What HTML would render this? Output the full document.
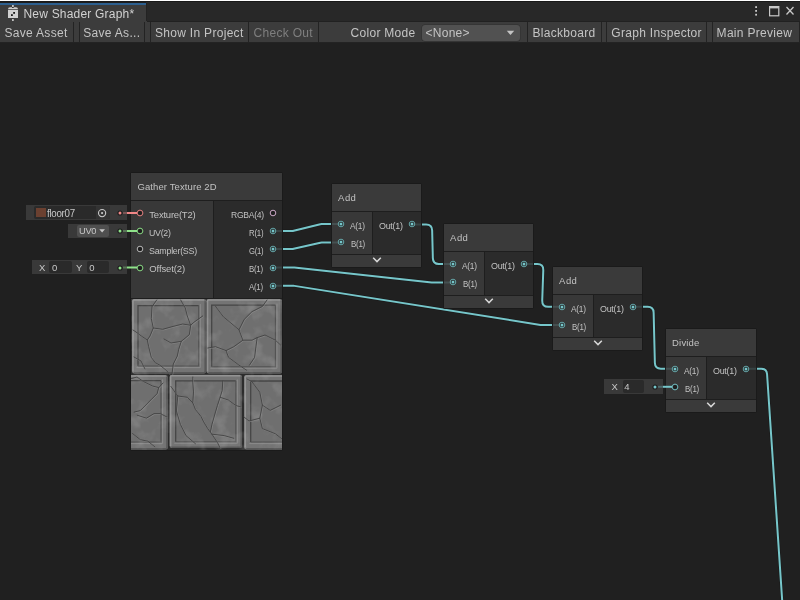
<!DOCTYPE html>
<html><head><meta charset="utf-8"><style>
html,body{margin:0;padding:0;width:800px;height:600px;overflow:hidden;background:#202020;font-family:"Liberation Sans", sans-serif;}
#root{position:absolute;left:0;top:0;width:800px;height:600px;overflow:hidden;will-change:transform;}
</style></head><body><div id="root">
<div style="position:absolute;left:0px;top:0px;width:800px;height:1px;background:#ffffff;"></div><div style="position:absolute;left:0px;top:1px;width:800px;height:1px;background:#191919;"></div><div style="position:absolute;left:0px;top:2px;width:800px;height:19px;background:#282828;"></div><div style="position:absolute;left:0px;top:2px;width:146px;height:1px;background:#1e1e1e;"></div><div style="position:absolute;left:0px;top:3px;width:146px;height:2px;background:#2c5f8f;"></div><div style="position:absolute;left:0px;top:5px;width:146px;height:16px;background:#3c3c3c;"></div><div style="position:absolute;left:146px;top:3px;width:1px;height:18px;background:#232323;"></div><svg style="position:absolute;left:0;top:0" width="30" height="22">
<rect x="12.1" y="5" width="1.6" height="2.2" fill="#d0d0d0"/>
<path d="M8 9.3 Q8 7.2 10 7.2 L16 7.2 Q18 7.2 18 9.3 Z" fill="#d0d0d0"/>
<rect x="12.1" y="7" width="1.6" height="1" fill="#2a2a2a"/>
<rect x="8" y="10" width="10" height="8" fill="#d0d0d0"/>
<rect x="11" y="14.2" width="1.8" height="1.8" fill="#1a1a1a"/>
<rect x="13.2" y="12" width="1.8" height="1.8" fill="#1a1a1a"/>
<rect x="12.1" y="19" width="1.6" height="2" fill="#d0d0d0"/>
</svg><div style="position:absolute;left:23.50px;top:7.75px;font-size:12px;line-height:13.79px;letter-spacing:0.200px;color:#d2d2d2;white-space:nowrap">New Shader Graph*</div><svg style="position:absolute;left:740px;top:0" width="60" height="21">
<rect x="15.2" y="6.2" width="1.8" height="1.8" fill="#c8c8c8"/>
<rect x="15.2" y="10" width="1.8" height="1.8" fill="#c8c8c8"/>
<rect x="15.2" y="13.8" width="1.8" height="1.8" fill="#c8c8c8"/>
<rect x="29.6" y="6.6" width="9.2" height="9.2" fill="none" stroke="#c8c8c8" stroke-width="1.2"/>
<rect x="29.6" y="6.6" width="9.2" height="1.8" fill="#c8c8c8"/>
<path d="M46.5 7 L53.5 14.5 M53.5 7 L46.5 14.5" stroke="#c8c8c8" stroke-width="1.3"/>
</svg><div style="position:absolute;left:0px;top:21px;width:800px;height:21px;background:#3c3c3c;"></div><div style="position:absolute;left:147px;top:21px;width:653px;height:1px;background:#212121;"></div><div style="position:absolute;left:0px;top:42px;width:800px;height:1px;background:#232323;"></div><div style="position:absolute;left:73px;top:22px;width:1px;height:20px;background:#232323;"></div><div style="position:absolute;left:79px;top:22px;width:1px;height:20px;background:#232323;"></div><div style="position:absolute;left:144px;top:22px;width:1px;height:20px;background:#232323;"></div><div style="position:absolute;left:150px;top:22px;width:1px;height:20px;background:#232323;"></div><div style="position:absolute;left:248px;top:22px;width:1px;height:20px;background:#232323;"></div><div style="position:absolute;left:318px;top:22px;width:1px;height:20px;background:#232323;"></div><div style="position:absolute;left:527px;top:22px;width:1px;height:20px;background:#232323;"></div><div style="position:absolute;left:601px;top:22px;width:1px;height:20px;background:#232323;"></div><div style="position:absolute;left:606px;top:22px;width:1px;height:20px;background:#232323;"></div><div style="position:absolute;left:706px;top:22px;width:1px;height:20px;background:#232323;"></div><div style="position:absolute;left:712px;top:22px;width:1px;height:20px;background:#232323;"></div><div style="position:absolute;left:799px;top:22px;width:1px;height:20px;background:#232323;"></div><div style="position:absolute;left:4.50px;top:26.75px;font-size:12px;line-height:13.79px;letter-spacing:0.300px;color:#c4c4c4;white-space:nowrap">Save Asset</div><div style="position:absolute;left:83.30px;top:26.75px;font-size:12px;line-height:13.79px;letter-spacing:0.300px;color:#c4c4c4;white-space:nowrap">Save As...</div><div style="position:absolute;left:155.00px;top:26.75px;font-size:12px;line-height:13.79px;letter-spacing:0.300px;color:#c4c4c4;white-space:nowrap">Show In Project</div><div style="position:absolute;left:253.50px;top:26.75px;font-size:12px;line-height:13.79px;letter-spacing:0.300px;color:#7f7f7f;white-space:nowrap">Check Out</div><div style="position:absolute;left:350.50px;top:26.75px;font-size:12px;line-height:13.79px;letter-spacing:0.300px;color:#c4c4c4;white-space:nowrap">Color Mode</div><div style="position:absolute;left:422px;top:25px;width:98px;height:16px;background:#515151;border-radius:3px;box-shadow:0 0 0 0.5px #2e2e2e"></div><div style="position:absolute;left:425.40px;top:26.75px;font-size:12px;line-height:13.79px;letter-spacing:0.300px;color:#c4c4c4;white-space:nowrap">&lt;None&gt;</div><svg style="position:absolute;left:506px;top:30px" width="10" height="6"><path d="M0.8 0.8 L8.2 0.8 L4.5 5 Z" fill="#c4c4c4"/></svg><div style="position:absolute;left:532.50px;top:26.75px;font-size:12px;line-height:13.79px;letter-spacing:0.300px;color:#c4c4c4;white-space:nowrap">Blackboard</div><div style="position:absolute;left:611.30px;top:26.75px;font-size:12px;line-height:13.79px;letter-spacing:0.300px;color:#c4c4c4;white-space:nowrap">Graph Inspector</div><div style="position:absolute;left:716.60px;top:26.75px;font-size:12px;line-height:13.79px;letter-spacing:0.300px;color:#c4c4c4;white-space:nowrap">Main Preview</div><div style="position:absolute;left:0px;top:43px;width:800px;height:557px;background:#202020;"></div><svg style="position:absolute;left:0;top:0" width="800" height="600"><path d="M273,231 L292.26,231.00 Q293,231 293.72,230.82 L320.28,224.18 Q321,224 321.74,224.00 L341,224" fill="none" stroke="#151515" stroke-width="3.2" stroke-opacity="0.6"/><path d="M273,249 L292.31,249.00 Q293,249 293.67,248.84 L320.33,242.66 Q321,242.5 321.69,242.50 L341,242.5" fill="none" stroke="#151515" stroke-width="3.2" stroke-opacity="0.6"/><path d="M273,267.5 L293.67,267.50 Q294,267.5 294.32,267.54 L431.68,282.46 Q432,282.5 432.33,282.50 L453,282.5" fill="none" stroke="#151515" stroke-width="3.2" stroke-opacity="0.6"/><path d="M273,285.8 L293.53,285.80 Q294,285.8 294.47,285.87 L540.53,324.93 Q541,325 541.47,325.00 L562,325" fill="none" stroke="#151515" stroke-width="3.2" stroke-opacity="0.6"/><path d="M412,224.5 L426.15,224.50 Q432,224.5 432.15,230.35 L432.85,258.15 Q433,264 438.85,264.00 L453,264" fill="none" stroke="#151515" stroke-width="3.2" stroke-opacity="0.6"/><path d="M524,264 L537.29,264.00 Q543.5,264 543.28,270.21 L542.22,300.59 Q542,306.8 548.21,306.80 L562,306.8" fill="none" stroke="#151515" stroke-width="3.2" stroke-opacity="0.6"/><path d="M633,306.8 L647.64,306.80 Q653.5,306.8 653.64,312.65 L654.86,362.85 Q655,368.7 660.86,368.70 L675,368.7" fill="none" stroke="#151515" stroke-width="3.2" stroke-opacity="0.6"/><path d="M746.7,368.7 L761.09,368.70 Q766.7,368.7 767.07,374.30 L783.5,620" fill="none" stroke="#151515" stroke-width="3.2" stroke-opacity="0.6"/><path d="M273,231 L292.26,231.00 Q293,231 293.72,230.82 L320.28,224.18 Q321,224 321.74,224.00 L341,224" fill="none" stroke="#76c6ca" stroke-width="2"/><path d="M273,249 L292.31,249.00 Q293,249 293.67,248.84 L320.33,242.66 Q321,242.5 321.69,242.50 L341,242.5" fill="none" stroke="#76c6ca" stroke-width="2"/><path d="M273,267.5 L293.67,267.50 Q294,267.5 294.32,267.54 L431.68,282.46 Q432,282.5 432.33,282.50 L453,282.5" fill="none" stroke="#76c6ca" stroke-width="2"/><path d="M273,285.8 L293.53,285.80 Q294,285.8 294.47,285.87 L540.53,324.93 Q541,325 541.47,325.00 L562,325" fill="none" stroke="#76c6ca" stroke-width="2"/><path d="M412,224.5 L426.15,224.50 Q432,224.5 432.15,230.35 L432.85,258.15 Q433,264 438.85,264.00 L453,264" fill="none" stroke="#76c6ca" stroke-width="2"/><path d="M524,264 L537.29,264.00 Q543.5,264 543.28,270.21 L542.22,300.59 Q542,306.8 548.21,306.80 L562,306.8" fill="none" stroke="#76c6ca" stroke-width="2"/><path d="M633,306.8 L647.64,306.80 Q653.5,306.8 653.64,312.65 L654.86,362.85 Q655,368.7 660.86,368.70 L675,368.7" fill="none" stroke="#76c6ca" stroke-width="2"/><path d="M746.7,368.7 L761.09,368.70 Q766.7,368.7 767.07,374.30 L783.5,620" fill="none" stroke="#76c6ca" stroke-width="2"/></svg><div style="position:absolute;left:130px;top:172px;width:151px;height:277px;border:1px solid #1a1a1a;border-radius:1.5px"></div><div style="position:absolute;left:131px;top:173px;width:151px;height:27px;background:rgba(63,63,63,0.86);"></div><div style="position:absolute;left:131px;top:200px;width:151px;height:1px;background:rgba(30,30,30,0.9);"></div><div style="position:absolute;left:131px;top:201px;width:82px;height:97px;background:rgba(60,60,60,0.86);"></div><div style="position:absolute;left:213px;top:201px;width:1px;height:97px;background:rgba(30,30,30,0.9);"></div><div style="position:absolute;left:214px;top:201px;width:68px;height:97px;background:rgba(45,45,45,0.86);"></div><div style="position:absolute;left:131px;top:298px;width:151px;height:1px;background:rgba(30,30,30,0.9);"></div><div style="position:absolute;left:137.40px;top:182.05px;font-size:9.5px;line-height:10.92px;letter-spacing:0.112px;color:#c2c2c2;white-space:nowrap;">Gather Texture 2D</div><svg style="position:absolute;left:136px;top:208.9px" width="8" height="8"><circle cx="4" cy="4" r="2.8" fill="#1e1e1e" stroke="#f08787" stroke-width="0.8"/></svg><div style="position:absolute;left:149.30px;top:210.25px;font-size:9.5px;line-height:10.92px;letter-spacing:-0.220px;color:#c2c2c2;white-space:nowrap;">Texture(T2)</div><svg style="position:absolute;left:136px;top:227.1px" width="8" height="8"><circle cx="4" cy="4" r="2.8" fill="#1e1e1e" stroke="#8fe38a" stroke-width="0.8"/></svg><div style="position:absolute;left:149.30px;top:228.25px;font-size:9.5px;line-height:10.92px;letter-spacing:-0.300px;color:#c2c2c2;white-space:nowrap;transform:scaleX(0.929);transform-origin:0px 0;">UV(2)</div><svg style="position:absolute;left:136px;top:245.2px" width="8" height="8"><circle cx="4" cy="4" r="2.8" fill="#1e1e1e" stroke="#d8d8d8" stroke-width="0.8"/></svg><div style="position:absolute;left:149.30px;top:246.05px;font-size:9.5px;line-height:10.92px;letter-spacing:-0.300px;color:#c2c2c2;white-space:nowrap;transform:scaleX(0.937);transform-origin:0px 0;">Sampler(SS)</div><svg style="position:absolute;left:136px;top:263.5px" width="8" height="8"><circle cx="4" cy="4" r="2.8" fill="#1e1e1e" stroke="#8fe38a" stroke-width="0.8"/></svg><div style="position:absolute;left:149.30px;top:264.05px;font-size:9.5px;line-height:10.92px;letter-spacing:-0.113px;color:#c2c2c2;white-space:nowrap;">Offset(2)</div><svg style="position:absolute;left:269px;top:208.9px" width="8" height="8"><circle cx="4" cy="4" r="2.8" fill="#1e1e1e" stroke="#f3c6ee" stroke-width="0.8"/></svg><div style="position:absolute;left:230.60px;top:209.65px;font-size:9.5px;line-height:10.92px;letter-spacing:-0.300px;color:#c2c2c2;white-space:nowrap;transform:scaleX(0.902);transform-origin:0px 0;">RGBA(4)</div><svg style="position:absolute;left:269px;top:227.1px" width="8" height="8"><circle cx="4" cy="4" r="2.8" fill="#1e1e1e" stroke="#76c6ca" stroke-width="0.8"/><circle cx="4" cy="4" r="1.5" fill="#76c6ca"/></svg><div style="position:absolute;left:249.10px;top:227.85px;font-size:9.5px;line-height:10.92px;letter-spacing:-0.300px;color:#c2c2c2;white-space:nowrap;transform:scaleX(0.827);transform-origin:0px 0;">R(1)</div><svg style="position:absolute;left:269px;top:245.2px" width="8" height="8"><circle cx="4" cy="4" r="2.8" fill="#1e1e1e" stroke="#76c6ca" stroke-width="0.8"/><circle cx="4" cy="4" r="1.5" fill="#76c6ca"/></svg><div style="position:absolute;left:248.60px;top:245.95px;font-size:9.5px;line-height:10.92px;letter-spacing:-0.300px;color:#c2c2c2;white-space:nowrap;transform:scaleX(0.809);transform-origin:0px 0;">G(1)</div><svg style="position:absolute;left:269px;top:263.5px" width="8" height="8"><circle cx="4" cy="4" r="2.8" fill="#1e1e1e" stroke="#76c6ca" stroke-width="0.8"/><circle cx="4" cy="4" r="1.5" fill="#76c6ca"/></svg><div style="position:absolute;left:249.10px;top:264.25px;font-size:9.5px;line-height:10.92px;letter-spacing:-0.300px;color:#c2c2c2;white-space:nowrap;transform:scaleX(0.827);transform-origin:0px 0;">B(1)</div><svg style="position:absolute;left:269px;top:281.7px" width="8" height="8"><circle cx="4" cy="4" r="2.8" fill="#1e1e1e" stroke="#76c6ca" stroke-width="0.8"/><circle cx="4" cy="4" r="1.5" fill="#76c6ca"/></svg><div style="position:absolute;left:249.10px;top:282.45px;font-size:9.5px;line-height:10.92px;letter-spacing:-0.300px;color:#c2c2c2;white-space:nowrap;transform:scaleX(0.827);transform-origin:0px 0;">A(1)</div><div style="position:absolute;left:331px;top:183px;width:89px;height:83px;border:1px solid #1a1a1a;border-radius:1.5px"></div><div style="position:absolute;left:332px;top:184px;width:89px;height:27px;background:rgba(63,63,63,0.86);"></div><div style="position:absolute;left:332px;top:211px;width:89px;height:1px;background:rgba(30,30,30,0.9);"></div><div style="position:absolute;left:332px;top:212px;width:40px;height:42px;background:rgba(60,60,60,0.86);"></div><div style="position:absolute;left:372px;top:212px;width:1px;height:42px;background:rgba(30,30,30,0.9);"></div><div style="position:absolute;left:373px;top:212px;width:48px;height:42px;background:rgba(45,45,45,0.86);"></div><div style="position:absolute;left:332px;top:254px;width:89px;height:1px;background:rgba(30,30,30,0.9);"></div><div style="position:absolute;left:332px;top:255px;width:89px;height:12px;background:rgba(63,63,63,0.86);"></div><svg style="position:absolute;left:371.5px;top:256.2px" width="10" height="8"><path d="M1.2 1.8 L5 5.6 L8.8 1.8" fill="none" stroke="#d8d8d8" stroke-width="1.5"/></svg><div style="position:absolute;left:338.10px;top:193.05px;font-size:9.5px;line-height:10.92px;letter-spacing:0.450px;color:#c2c2c2;white-space:nowrap;">Add</div><svg style="position:absolute;left:337px;top:220.1px" width="8" height="8"><circle cx="4" cy="4" r="2.8" fill="#1e1e1e" stroke="#76c6ca" stroke-width="0.8"/><circle cx="4" cy="4" r="1.5" fill="#76c6ca"/></svg><svg style="position:absolute;left:337px;top:238.3px" width="8" height="8"><circle cx="4" cy="4" r="2.8" fill="#1e1e1e" stroke="#76c6ca" stroke-width="0.8"/><circle cx="4" cy="4" r="1.5" fill="#76c6ca"/></svg><div style="position:absolute;left:350.10px;top:220.85px;font-size:9.5px;line-height:10.92px;letter-spacing:-0.300px;color:#c2c2c2;white-space:nowrap;transform:scaleX(0.877);transform-origin:0px 0;">A(1)</div><div style="position:absolute;left:350.85px;top:239.05px;font-size:9.5px;line-height:10.92px;letter-spacing:-0.300px;color:#c2c2c2;white-space:nowrap;transform:scaleX(0.833);transform-origin:0px 0;">B(1)</div><svg style="position:absolute;left:408px;top:220.1px" width="8" height="8"><circle cx="4" cy="4" r="2.8" fill="#1e1e1e" stroke="#76c6ca" stroke-width="0.8"/><circle cx="4" cy="4" r="1.5" fill="#76c6ca"/></svg><div style="position:absolute;left:379.10px;top:220.95px;font-size:9.5px;line-height:10.92px;letter-spacing:-0.300px;color:#c2c2c2;white-space:nowrap;transform:scaleX(0.941);transform-origin:0px 0;">Out(1)</div><div style="position:absolute;left:443px;top:223px;width:89px;height:84px;border:1px solid #1a1a1a;border-radius:1.5px"></div><div style="position:absolute;left:444px;top:224px;width:89px;height:27px;background:rgba(63,63,63,0.86);"></div><div style="position:absolute;left:444px;top:251px;width:89px;height:1px;background:rgba(30,30,30,0.9);"></div><div style="position:absolute;left:444px;top:252px;width:40px;height:43px;background:rgba(60,60,60,0.86);"></div><div style="position:absolute;left:484px;top:252px;width:1px;height:43px;background:rgba(30,30,30,0.9);"></div><div style="position:absolute;left:485px;top:252px;width:48px;height:43px;background:rgba(45,45,45,0.86);"></div><div style="position:absolute;left:444px;top:295px;width:89px;height:1px;background:rgba(30,30,30,0.9);"></div><div style="position:absolute;left:444px;top:296px;width:89px;height:12px;background:rgba(63,63,63,0.86);"></div><svg style="position:absolute;left:483.5px;top:297.2px" width="10" height="8"><path d="M1.2 1.8 L5 5.6 L8.8 1.8" fill="none" stroke="#d8d8d8" stroke-width="1.5"/></svg><div style="position:absolute;left:450.10px;top:233.05px;font-size:9.5px;line-height:10.92px;letter-spacing:0.450px;color:#c2c2c2;white-space:nowrap;">Add</div><svg style="position:absolute;left:449px;top:260.1px" width="8" height="8"><circle cx="4" cy="4" r="2.8" fill="#1e1e1e" stroke="#76c6ca" stroke-width="0.8"/><circle cx="4" cy="4" r="1.5" fill="#76c6ca"/></svg><svg style="position:absolute;left:449px;top:278.3px" width="8" height="8"><circle cx="4" cy="4" r="2.8" fill="#1e1e1e" stroke="#76c6ca" stroke-width="0.8"/><circle cx="4" cy="4" r="1.5" fill="#76c6ca"/></svg><div style="position:absolute;left:462.10px;top:260.85px;font-size:9.5px;line-height:10.92px;letter-spacing:-0.300px;color:#c2c2c2;white-space:nowrap;transform:scaleX(0.877);transform-origin:0px 0;">A(1)</div><div style="position:absolute;left:462.85px;top:279.05px;font-size:9.5px;line-height:10.92px;letter-spacing:-0.300px;color:#c2c2c2;white-space:nowrap;transform:scaleX(0.833);transform-origin:0px 0;">B(1)</div><svg style="position:absolute;left:520px;top:260.1px" width="8" height="8"><circle cx="4" cy="4" r="2.8" fill="#1e1e1e" stroke="#76c6ca" stroke-width="0.8"/><circle cx="4" cy="4" r="1.5" fill="#76c6ca"/></svg><div style="position:absolute;left:491.10px;top:260.95px;font-size:9.5px;line-height:10.92px;letter-spacing:-0.300px;color:#c2c2c2;white-space:nowrap;transform:scaleX(0.941);transform-origin:0px 0;">Out(1)</div><div style="position:absolute;left:552px;top:266px;width:89px;height:83px;border:1px solid #1a1a1a;border-radius:1.5px"></div><div style="position:absolute;left:553px;top:267px;width:89px;height:27px;background:rgba(63,63,63,0.86);"></div><div style="position:absolute;left:553px;top:294px;width:89px;height:1px;background:rgba(30,30,30,0.9);"></div><div style="position:absolute;left:553px;top:295px;width:40px;height:42px;background:rgba(60,60,60,0.86);"></div><div style="position:absolute;left:593px;top:295px;width:1px;height:42px;background:rgba(30,30,30,0.9);"></div><div style="position:absolute;left:594px;top:295px;width:48px;height:42px;background:rgba(45,45,45,0.86);"></div><div style="position:absolute;left:553px;top:337px;width:89px;height:1px;background:rgba(30,30,30,0.9);"></div><div style="position:absolute;left:553px;top:338px;width:89px;height:12px;background:rgba(63,63,63,0.86);"></div><svg style="position:absolute;left:592.5px;top:339.2px" width="10" height="8"><path d="M1.2 1.8 L5 5.6 L8.8 1.8" fill="none" stroke="#d8d8d8" stroke-width="1.5"/></svg><div style="position:absolute;left:559.10px;top:276.05px;font-size:9.5px;line-height:10.92px;letter-spacing:0.450px;color:#c2c2c2;white-space:nowrap;">Add</div><svg style="position:absolute;left:558px;top:303.1px" width="8" height="8"><circle cx="4" cy="4" r="2.8" fill="#1e1e1e" stroke="#76c6ca" stroke-width="0.8"/><circle cx="4" cy="4" r="1.5" fill="#76c6ca"/></svg><svg style="position:absolute;left:558px;top:321.3px" width="8" height="8"><circle cx="4" cy="4" r="2.8" fill="#1e1e1e" stroke="#76c6ca" stroke-width="0.8"/><circle cx="4" cy="4" r="1.5" fill="#76c6ca"/></svg><div style="position:absolute;left:571.10px;top:303.85px;font-size:9.5px;line-height:10.92px;letter-spacing:-0.300px;color:#c2c2c2;white-space:nowrap;transform:scaleX(0.877);transform-origin:0px 0;">A(1)</div><div style="position:absolute;left:571.85px;top:322.05px;font-size:9.5px;line-height:10.92px;letter-spacing:-0.300px;color:#c2c2c2;white-space:nowrap;transform:scaleX(0.833);transform-origin:0px 0;">B(1)</div><svg style="position:absolute;left:629px;top:303.1px" width="8" height="8"><circle cx="4" cy="4" r="2.8" fill="#1e1e1e" stroke="#76c6ca" stroke-width="0.8"/><circle cx="4" cy="4" r="1.5" fill="#76c6ca"/></svg><div style="position:absolute;left:600.10px;top:303.95px;font-size:9.5px;line-height:10.92px;letter-spacing:-0.300px;color:#c2c2c2;white-space:nowrap;transform:scaleX(0.941);transform-origin:0px 0;">Out(1)</div><div style="position:absolute;left:665px;top:328px;width:90px;height:83px;border:1px solid #1a1a1a;border-radius:1.5px"></div><div style="position:absolute;left:666px;top:329px;width:90px;height:27px;background:rgba(63,63,63,0.86);"></div><div style="position:absolute;left:666px;top:356px;width:90px;height:1px;background:rgba(30,30,30,0.9);"></div><div style="position:absolute;left:666px;top:357px;width:40px;height:42px;background:rgba(60,60,60,0.86);"></div><div style="position:absolute;left:706px;top:357px;width:1px;height:42px;background:rgba(30,30,30,0.9);"></div><div style="position:absolute;left:707px;top:357px;width:49px;height:42px;background:rgba(45,45,45,0.86);"></div><div style="position:absolute;left:666px;top:399px;width:90px;height:1px;background:rgba(30,30,30,0.9);"></div><div style="position:absolute;left:666px;top:400px;width:90px;height:12px;background:rgba(63,63,63,0.86);"></div><svg style="position:absolute;left:706.0px;top:401.2px" width="10" height="8"><path d="M1.2 1.8 L5 5.6 L8.8 1.8" fill="none" stroke="#d8d8d8" stroke-width="1.5"/></svg><div style="position:absolute;left:672.10px;top:338.05px;font-size:9.5px;line-height:10.92px;letter-spacing:0.160px;color:#c2c2c2;white-space:nowrap;">Divide</div><svg style="position:absolute;left:671px;top:365.1px" width="8" height="8"><circle cx="4" cy="4" r="2.8" fill="#1e1e1e" stroke="#76c6ca" stroke-width="0.8"/><circle cx="4" cy="4" r="1.5" fill="#76c6ca"/></svg><svg style="position:absolute;left:671px;top:383.3px" width="8" height="8"><circle cx="4" cy="4" r="2.8" fill="#1e1e1e" stroke="#76c6ca" stroke-width="0.8"/><circle cx="4" cy="4" r="1.5" fill="#76c6ca"/></svg><div style="position:absolute;left:684.10px;top:365.85px;font-size:9.5px;line-height:10.92px;letter-spacing:-0.300px;color:#c2c2c2;white-space:nowrap;transform:scaleX(0.877);transform-origin:0px 0;">A(1)</div><div style="position:absolute;left:684.85px;top:384.05px;font-size:9.5px;line-height:10.92px;letter-spacing:-0.300px;color:#c2c2c2;white-space:nowrap;transform:scaleX(0.833);transform-origin:0px 0;">B(1)</div><svg style="position:absolute;left:742px;top:365.1px" width="8" height="8"><circle cx="4" cy="4" r="2.8" fill="#1e1e1e" stroke="#76c6ca" stroke-width="0.8"/><circle cx="4" cy="4" r="1.5" fill="#76c6ca"/></svg><div style="position:absolute;left:713.10px;top:365.95px;font-size:9.5px;line-height:10.92px;letter-spacing:-0.300px;color:#c2c2c2;white-space:nowrap;transform:scaleX(0.941);transform-origin:0px 0;">Out(1)</div><div style="position:absolute;left:26px;top:205px;width:101px;height:15px;background:#393939;"></div><div style="position:absolute;left:34px;top:206px;width:75.5px;height:13px;background:#2a2a2a;border-radius:2px"></div><div style="position:absolute;left:95.5px;top:206px;width:14px;height:13px;background:#333333;border-radius:0 2px 2px 0"></div><div style="position:absolute;left:36.3px;top:208.4px;width:9.5px;height:8.5px;background:#6b4030;"></div><div style="position:absolute;left:47.25px;top:208.44px;font-size:10px;line-height:11.49px;letter-spacing:-0.300px;color:#c8c8c8;white-space:nowrap;transform:scaleX(0.975);transform-origin:0px 0;">floor07</div><svg style="position:absolute;left:97px;top:208px" width="11" height="11"><circle cx="5.1" cy="5.1" r="3.6" fill="none" stroke="#c8c8c8" stroke-width="1.1"/><circle cx="5.1" cy="5.1" r="1.1" fill="#c8c8c8"/></svg><div style="position:absolute;left:68px;top:224px;width:59px;height:14px;background:#393939;"></div><div style="position:absolute;left:77px;top:225px;width:32px;height:11.5px;background:#4f4f4f;border-radius:2px"></div><div style="position:absolute;left:79.00px;top:226.15px;font-size:9.5px;line-height:10.92px;letter-spacing:-0.300px;color:#c8c8c8;white-space:nowrap;transform:scaleX(0.977);transform-origin:0px 0;">UV0</div><svg style="position:absolute;left:99px;top:229px" width="7" height="4"><path d="M0.3 0.3 L6 0.3 L3.15 3.4 Z" fill="#c8c8c8"/></svg><div style="position:absolute;left:32px;top:260px;width:95px;height:14px;background:#393939;"></div><div style="position:absolute;left:39.00px;top:263.05px;font-size:9.5px;line-height:10.92px;letter-spacing:0.000px;color:#c8c8c8;white-space:nowrap;">X</div><div style="position:absolute;left:49.3px;top:261px;width:22.5px;height:12px;background:#2a2a2a;border-radius:2px"></div><div style="position:absolute;left:52.10px;top:263.05px;font-size:9.5px;line-height:10.92px;letter-spacing:0.000px;color:#c8c8c8;white-space:nowrap;">0</div><div style="position:absolute;left:75.90px;top:263.05px;font-size:9.5px;line-height:10.92px;letter-spacing:0.000px;color:#c8c8c8;white-space:nowrap;">Y</div><div style="position:absolute;left:86.5px;top:261px;width:22.5px;height:12px;background:#2a2a2a;border-radius:2px"></div><div style="position:absolute;left:89.30px;top:263.05px;font-size:9.5px;line-height:10.92px;letter-spacing:0.000px;color:#c8c8c8;white-space:nowrap;">0</div><div style="position:absolute;left:604px;top:379px;width:59px;height:15px;background:#393939;"></div><div style="position:absolute;left:611.40px;top:382.15px;font-size:9.5px;line-height:10.92px;letter-spacing:0.000px;color:#c8c8c8;white-space:nowrap;">X</div><div style="position:absolute;left:622.6px;top:380px;width:21.2px;height:12.7px;background:#2a2a2a;border-radius:2px"></div><div style="position:absolute;left:624.20px;top:382.15px;font-size:9.5px;line-height:10.92px;letter-spacing:0.000px;color:#c8c8c8;white-space:nowrap;">4</div><svg style="position:absolute;left:0;top:0" width="800" height="600">
<path d="M123,213 L127,213" stroke="#f08787" stroke-opacity="0.35" stroke-width="2"/>
<path d="M127,213 L138,213" stroke="#f08787" stroke-width="2"/>
<path d="M123,231 L127,231" stroke="#8fe38a" stroke-opacity="0.35" stroke-width="2"/>
<path d="M127,231 L138,231" stroke="#8fe38a" stroke-width="2"/>
<path d="M123,267.5 L127,267.5" stroke="#8fe38a" stroke-opacity="0.35" stroke-width="2"/>
<path d="M127,267.5 L138,267.5" stroke="#8fe38a" stroke-width="2"/>
<path d="M658,386.8 L663,386.8" stroke="#76c6ca" stroke-opacity="0.35" stroke-width="2"/>
<path d="M663,386.8 L673,386.8" stroke="#76c6ca" stroke-width="2"/>
</svg><svg style="position:absolute;left:116.7px;top:210px" width="6" height="6"><circle cx="3" cy="3" r="2.6" fill="#1d1d1d"/><circle cx="3" cy="3" r="1.5" fill="#f08787"/></svg><svg style="position:absolute;left:116.7px;top:228px" width="6" height="6"><circle cx="3" cy="3" r="2.6" fill="#1d1d1d"/><circle cx="3" cy="3" r="1.5" fill="#8fe38a"/></svg><svg style="position:absolute;left:116.7px;top:264.5px" width="6" height="6"><circle cx="3" cy="3" r="2.6" fill="#1d1d1d"/><circle cx="3" cy="3" r="1.5" fill="#8fe38a"/></svg><svg style="position:absolute;left:652.2px;top:383.8px" width="6" height="6"><circle cx="3" cy="3" r="2.6" fill="#1d1d1d"/><circle cx="3" cy="3" r="1.5" fill="#76c6ca"/></svg><svg style="position:absolute;left:136px;top:209px" width="8" height="8"><circle cx="4" cy="4" r="2.8" fill="#1e1e1e" stroke="#f08787" stroke-width="0.8"/></svg><svg style="position:absolute;left:136px;top:227.1px" width="8" height="8"><circle cx="4" cy="4" r="2.8" fill="#1e1e1e" stroke="#8fe38a" stroke-width="0.8"/></svg><svg style="position:absolute;left:136px;top:263.5px" width="8" height="8"><circle cx="4" cy="4" r="2.8" fill="#1e1e1e" stroke="#8fe38a" stroke-width="0.8"/></svg><svg style="position:absolute;left:671.2px;top:382.8px" width="8" height="8"><circle cx="4" cy="4" r="2.8" fill="#1e1e1e" stroke="#76c6ca" stroke-width="0.8"/></svg><svg style="position:absolute;left:131px;top:299px" width="151" height="151" viewBox="0 0 151 151">
<defs>
<filter id="nz" x="0" y="0" width="100%" height="100%">
<feTurbulence type="fractalNoise" baseFrequency="0.06" numOctaves="3" seed="7" result="t"/>
<feColorMatrix type="matrix" values="0 0 0 0 0.5  0 0 0 0 0.5  0 0 0 0 0.5  0.9 0 0 0 -0.45" in="t"/>
</filter>
</defs>
<rect width="151" height="151" fill="#2c2c2c"/>
<rect x="1" y="0" width="74" height="74.5" rx="2.2" fill="#747474"/>
<path d="M2,72.5 L2,2 Q2,1 3,1 L73,1" fill="none" stroke="#939393" stroke-width="1.6"/>
<path d="M3,73.7 L73,73.7 Q74.2,73.7 74.2,72.5 L74.2,2" fill="none" stroke="#585858" stroke-width="1.6"/>
<rect x="7" y="6.6" width="60.7" height="60.4" fill="#6f6f6f"/>
<path d="M7,67 L7,6.6 L67.7,6.6" fill="none" stroke="#454545" stroke-width="1.3"/>
<path d="M7,67 L67.7,67 L67.7,6.6" fill="none" stroke="#525252" stroke-width="1.1"/>
<path d="M5.5,68.6 L69.3,68.6 L69.3,5.1" fill="none" stroke="#8c8c8c" stroke-width="0.9"/>
<rect x="75.5" y="0" width="75.5" height="74.5" rx="2.2" fill="#747474"/>
<path d="M76.5,72.5 L76.5,2 Q76.5,1 77.5,1 L149,1" fill="none" stroke="#939393" stroke-width="1.6"/>
<path d="M77.5,73.7 L149,73.7 Q150.2,73.7 150.2,72.5 L150.2,2" fill="none" stroke="#585858" stroke-width="1.6"/>
<rect x="80.7" y="6.1" width="63.7" height="61.6" fill="#6f6f6f"/>
<path d="M80.7,67.7 L80.7,6.1 L144.4,6.1" fill="none" stroke="#454545" stroke-width="1.3"/>
<path d="M80.7,67.7 L144.4,67.7 L144.4,6.1" fill="none" stroke="#525252" stroke-width="1.1"/>
<path d="M79.2,69.3 L146.0,69.3 L146.0,4.6" fill="none" stroke="#8c8c8c" stroke-width="0.9"/>
<rect x="-3" y="76" width="39.8" height="74.5" rx="2.2" fill="#747474"/>
<path d="M-2,148.5 L-2,78 Q-2,77 -1,77 L34.8,77" fill="none" stroke="#939393" stroke-width="1.6"/>
<path d="M-1,149.7 L34.8,149.7 Q36.0,149.7 36.0,148.5 L36.0,78" fill="none" stroke="#585858" stroke-width="1.6"/>
<rect x="-10" y="81.7" width="40" height="61.3" fill="#6f6f6f"/>
<path d="M-10,143 L-10,81.7 L30,81.7" fill="none" stroke="#454545" stroke-width="1.3"/>
<path d="M-10,143 L30,143 L30,81.7" fill="none" stroke="#525252" stroke-width="1.1"/>
<path d="M-11.5,144.6 L31.6,144.6 L31.6,80.2" fill="none" stroke="#8c8c8c" stroke-width="0.9"/>
<rect x="38.6" y="75.8" width="72.4" height="73.2" rx="2.2" fill="#747474"/>
<path d="M39.6,147 L39.6,77.8 Q39.6,76.8 40.6,76.8 L109,76.8" fill="none" stroke="#939393" stroke-width="1.6"/>
<path d="M40.6,148.2 L109,148.2 Q110.2,148.2 110.2,147 L110.2,77.8" fill="none" stroke="#585858" stroke-width="1.6"/>
<rect x="44.7" y="81.9" width="60.099999999999994" height="60.79999999999998" fill="#6f6f6f"/>
<path d="M44.7,142.7 L44.7,81.9 L104.8,81.9" fill="none" stroke="#454545" stroke-width="1.3"/>
<path d="M44.7,142.7 L104.8,142.7 L104.8,81.9" fill="none" stroke="#525252" stroke-width="1.1"/>
<path d="M43.2,144.29999999999998 L106.39999999999999,144.29999999999998 L106.39999999999999,80.4" fill="none" stroke="#8c8c8c" stroke-width="0.9"/>
<rect x="113.2" y="76" width="39.8" height="74.5" rx="2.2" fill="#747474"/>
<path d="M114.2,148.5 L114.2,78 Q114.2,77 115.2,77 L151,77" fill="none" stroke="#939393" stroke-width="1.6"/>
<path d="M115.2,149.7 L151,149.7 Q152.2,149.7 152.2,148.5 L152.2,78" fill="none" stroke="#585858" stroke-width="1.6"/>
<rect x="119.7" y="82" width="38.3" height="61" fill="#6f6f6f"/>
<path d="M119.7,143 L119.7,82 L158,82" fill="none" stroke="#454545" stroke-width="1.3"/>
<path d="M119.7,143 L158,143 L158,82" fill="none" stroke="#525252" stroke-width="1.1"/>
<path d="M118.2,144.6 L159.6,144.6 L159.6,80.5" fill="none" stroke="#8c8c8c" stroke-width="0.9"/>
<rect width="151" height="151" filter="url(#nz)" opacity="0.8"/>
<path d="M25.7,1 L21,7.7 L20.3,19.7 L22.3,29 L19,37 L16.3,41 L17.7,47.7 L20.3,58.3 L24.3,63.7 L29,66.3 L35.7,71.7 L38.3,75" fill="none" stroke="#8e8e8e" stroke-width="0.6" stroke-linejoin="round" transform="translate(0.7,0.7)"/>
<path d="M16.3,41 L10.3,37 L5,33 L2,31" fill="none" stroke="#8e8e8e" stroke-width="0.6" stroke-linejoin="round" transform="translate(0.7,0.7)"/>
<path d="M49.7,1 L54.3,9 L56.3,17 L59.7,26.3 L58.3,35.7 L50.3,42.3 L47.7,50.3 L46.3,57 L42.3,65 L41,75" fill="none" stroke="#8e8e8e" stroke-width="0.6" stroke-linejoin="round" transform="translate(0.7,0.7)"/>
<path d="M22.3,29 L31.7,30.3 L41,27.7 L51.7,25 L59.7,26.3 L62.3,23.7 L71.7,17" fill="none" stroke="#8e8e8e" stroke-width="0.6" stroke-linejoin="round" transform="translate(0.7,0.7)"/>
<path d="M33,40 L40,44 L50.3,42.3" fill="none" stroke="#8e8e8e" stroke-width="0.6" stroke-linejoin="round" transform="translate(0.7,0.7)"/>
<path d="M3,58 L10,62 L14,70" fill="none" stroke="#8e8e8e" stroke-width="0.6" stroke-linejoin="round" transform="translate(0.7,0.7)"/>
<path d="M76.8,49 L84.6,47.7 L95,51.6 L102.8,47.7 L111.9,41.2 L121,41.2 L126.2,38.6 L134,36 L144.4,41.2 L150,46.4" fill="none" stroke="#8e8e8e" stroke-width="0.6" stroke-linejoin="round" transform="translate(0.7,0.7)"/>
<path d="M111.9,41.2 L108,30.8 L113.2,20.4 L121,12.6 L131.4,7.4 L136,1" fill="none" stroke="#8e8e8e" stroke-width="0.6" stroke-linejoin="round" transform="translate(0.7,0.7)"/>
<path d="M126.2,38.6 L124.9,48 L123.6,58.4 L118.4,66.2" fill="none" stroke="#8e8e8e" stroke-width="0.6" stroke-linejoin="round" transform="translate(0.7,0.7)"/>
<path d="M95,51.6 L97.6,58.4 L108,66.2 L115.8,71.4" fill="none" stroke="#8e8e8e" stroke-width="0.6" stroke-linejoin="round" transform="translate(0.7,0.7)"/>
<path d="M84.6,7.4 L92.4,17.8 L108,30.8" fill="none" stroke="#8e8e8e" stroke-width="0.6" stroke-linejoin="round" transform="translate(0.7,0.7)"/>
<path d="M-1,80 L6,78 L12.3,82.5 L21.5,87 L27.7,88.6 L32,84" fill="none" stroke="#8e8e8e" stroke-width="0.6" stroke-linejoin="round" transform="translate(0.7,0.7)"/>
<path d="M27.7,88.6 L26.1,94.7 L20,100.8 L13.9,107 L9.3,111.6 L3.1,113.1" fill="none" stroke="#8e8e8e" stroke-width="0.6" stroke-linejoin="round" transform="translate(0.7,0.7)"/>
<path d="M6.2,116.2 L15.4,119.2 L23,114.6 L29.2,114.6 L36,118" fill="none" stroke="#8e8e8e" stroke-width="0.6" stroke-linejoin="round" transform="translate(0.7,0.7)"/>
<path d="M1.6,134.6 L9.3,140.7 L16.9,142.2 L24,148" fill="none" stroke="#8e8e8e" stroke-width="0.6" stroke-linejoin="round" transform="translate(0.7,0.7)"/>
<path d="M61.8,78 L61.8,83.3 L62.5,92.9 L61.8,103.8 L64.5,110.6 L70,117.4 L72.7,122.9 L76.8,129.7 L80.9,135.2 L86.4,143.4 L89.1,148.9" fill="none" stroke="#8e8e8e" stroke-width="0.6" stroke-linejoin="round" transform="translate(0.7,0.7)"/>
<path d="M91.8,81.9 L91.2,91.5 L89.1,98.3 L86.4,106.5 L83.6,116.1 L80.9,125.6 L79.5,132.5" fill="none" stroke="#8e8e8e" stroke-width="0.6" stroke-linejoin="round" transform="translate(0.7,0.7)"/>
<path d="M39.9,87.4 L46.8,97 L56.3,98.3 L61.8,103.8" fill="none" stroke="#8e8e8e" stroke-width="0.6" stroke-linejoin="round" transform="translate(0.7,0.7)"/>
<path d="M46.8,97 L45.4,112 L49.5,125.6 L55,136.6 L64.5,144.8" fill="none" stroke="#8e8e8e" stroke-width="0.6" stroke-linejoin="round" transform="translate(0.7,0.7)"/>
<path d="M89.1,98.3 L97.3,101 L104.8,106.5 L109.6,107.9" fill="none" stroke="#8e8e8e" stroke-width="0.6" stroke-linejoin="round" transform="translate(0.7,0.7)"/>
<path d="M80.9,135.2 L93.2,136.6 L102.8,139.3" fill="none" stroke="#8e8e8e" stroke-width="0.6" stroke-linejoin="round" transform="translate(0.7,0.7)"/>
<path d="M116,80 L121,82.8 L128.8,93.2 L131.4,106.2 L139.2,111.4 L149.6,106.2" fill="none" stroke="#8e8e8e" stroke-width="0.6" stroke-linejoin="round" transform="translate(0.7,0.7)"/>
<path d="M131.4,106.2 L128.8,119.2 L131.4,129.6 L144.4,134.8 L151,140" fill="none" stroke="#8e8e8e" stroke-width="0.6" stroke-linejoin="round" transform="translate(0.7,0.7)"/>
<path d="M128.8,119.2 L118,122 L113,118" fill="none" stroke="#8e8e8e" stroke-width="0.6" stroke-linejoin="round" transform="translate(0.7,0.7)"/>
<path d="M25.7,1 L21,7.7 L20.3,19.7 L22.3,29 L19,37 L16.3,41 L17.7,47.7 L20.3,58.3 L24.3,63.7 L29,66.3 L35.7,71.7 L38.3,75" fill="none" stroke="#434343" stroke-width="0.9" stroke-linejoin="round" stroke-linecap="round"/>
<path d="M16.3,41 L10.3,37 L5,33 L2,31" fill="none" stroke="#434343" stroke-width="0.9" stroke-linejoin="round" stroke-linecap="round"/>
<path d="M49.7,1 L54.3,9 L56.3,17 L59.7,26.3 L58.3,35.7 L50.3,42.3 L47.7,50.3 L46.3,57 L42.3,65 L41,75" fill="none" stroke="#434343" stroke-width="0.9" stroke-linejoin="round" stroke-linecap="round"/>
<path d="M22.3,29 L31.7,30.3 L41,27.7 L51.7,25 L59.7,26.3 L62.3,23.7 L71.7,17" fill="none" stroke="#434343" stroke-width="0.9" stroke-linejoin="round" stroke-linecap="round"/>
<path d="M33,40 L40,44 L50.3,42.3" fill="none" stroke="#434343" stroke-width="0.9" stroke-linejoin="round" stroke-linecap="round"/>
<path d="M3,58 L10,62 L14,70" fill="none" stroke="#434343" stroke-width="0.9" stroke-linejoin="round" stroke-linecap="round"/>
<path d="M76.8,49 L84.6,47.7 L95,51.6 L102.8,47.7 L111.9,41.2 L121,41.2 L126.2,38.6 L134,36 L144.4,41.2 L150,46.4" fill="none" stroke="#434343" stroke-width="0.9" stroke-linejoin="round" stroke-linecap="round"/>
<path d="M111.9,41.2 L108,30.8 L113.2,20.4 L121,12.6 L131.4,7.4 L136,1" fill="none" stroke="#434343" stroke-width="0.9" stroke-linejoin="round" stroke-linecap="round"/>
<path d="M126.2,38.6 L124.9,48 L123.6,58.4 L118.4,66.2" fill="none" stroke="#434343" stroke-width="0.9" stroke-linejoin="round" stroke-linecap="round"/>
<path d="M95,51.6 L97.6,58.4 L108,66.2 L115.8,71.4" fill="none" stroke="#434343" stroke-width="0.9" stroke-linejoin="round" stroke-linecap="round"/>
<path d="M84.6,7.4 L92.4,17.8 L108,30.8" fill="none" stroke="#434343" stroke-width="0.9" stroke-linejoin="round" stroke-linecap="round"/>
<path d="M-1,80 L6,78 L12.3,82.5 L21.5,87 L27.7,88.6 L32,84" fill="none" stroke="#434343" stroke-width="0.9" stroke-linejoin="round" stroke-linecap="round"/>
<path d="M27.7,88.6 L26.1,94.7 L20,100.8 L13.9,107 L9.3,111.6 L3.1,113.1" fill="none" stroke="#434343" stroke-width="0.9" stroke-linejoin="round" stroke-linecap="round"/>
<path d="M6.2,116.2 L15.4,119.2 L23,114.6 L29.2,114.6 L36,118" fill="none" stroke="#434343" stroke-width="0.9" stroke-linejoin="round" stroke-linecap="round"/>
<path d="M1.6,134.6 L9.3,140.7 L16.9,142.2 L24,148" fill="none" stroke="#434343" stroke-width="0.9" stroke-linejoin="round" stroke-linecap="round"/>
<path d="M61.8,78 L61.8,83.3 L62.5,92.9 L61.8,103.8 L64.5,110.6 L70,117.4 L72.7,122.9 L76.8,129.7 L80.9,135.2 L86.4,143.4 L89.1,148.9" fill="none" stroke="#434343" stroke-width="0.9" stroke-linejoin="round" stroke-linecap="round"/>
<path d="M91.8,81.9 L91.2,91.5 L89.1,98.3 L86.4,106.5 L83.6,116.1 L80.9,125.6 L79.5,132.5" fill="none" stroke="#434343" stroke-width="0.9" stroke-linejoin="round" stroke-linecap="round"/>
<path d="M39.9,87.4 L46.8,97 L56.3,98.3 L61.8,103.8" fill="none" stroke="#434343" stroke-width="0.9" stroke-linejoin="round" stroke-linecap="round"/>
<path d="M46.8,97 L45.4,112 L49.5,125.6 L55,136.6 L64.5,144.8" fill="none" stroke="#434343" stroke-width="0.9" stroke-linejoin="round" stroke-linecap="round"/>
<path d="M89.1,98.3 L97.3,101 L104.8,106.5 L109.6,107.9" fill="none" stroke="#434343" stroke-width="0.9" stroke-linejoin="round" stroke-linecap="round"/>
<path d="M80.9,135.2 L93.2,136.6 L102.8,139.3" fill="none" stroke="#434343" stroke-width="0.9" stroke-linejoin="round" stroke-linecap="round"/>
<path d="M116,80 L121,82.8 L128.8,93.2 L131.4,106.2 L139.2,111.4 L149.6,106.2" fill="none" stroke="#434343" stroke-width="0.9" stroke-linejoin="round" stroke-linecap="round"/>
<path d="M131.4,106.2 L128.8,119.2 L131.4,129.6 L144.4,134.8 L151,140" fill="none" stroke="#434343" stroke-width="0.9" stroke-linejoin="round" stroke-linecap="round"/>
<path d="M128.8,119.2 L118,122 L113,118" fill="none" stroke="#434343" stroke-width="0.9" stroke-linejoin="round" stroke-linecap="round"/>
</svg>
</div></body></html>
